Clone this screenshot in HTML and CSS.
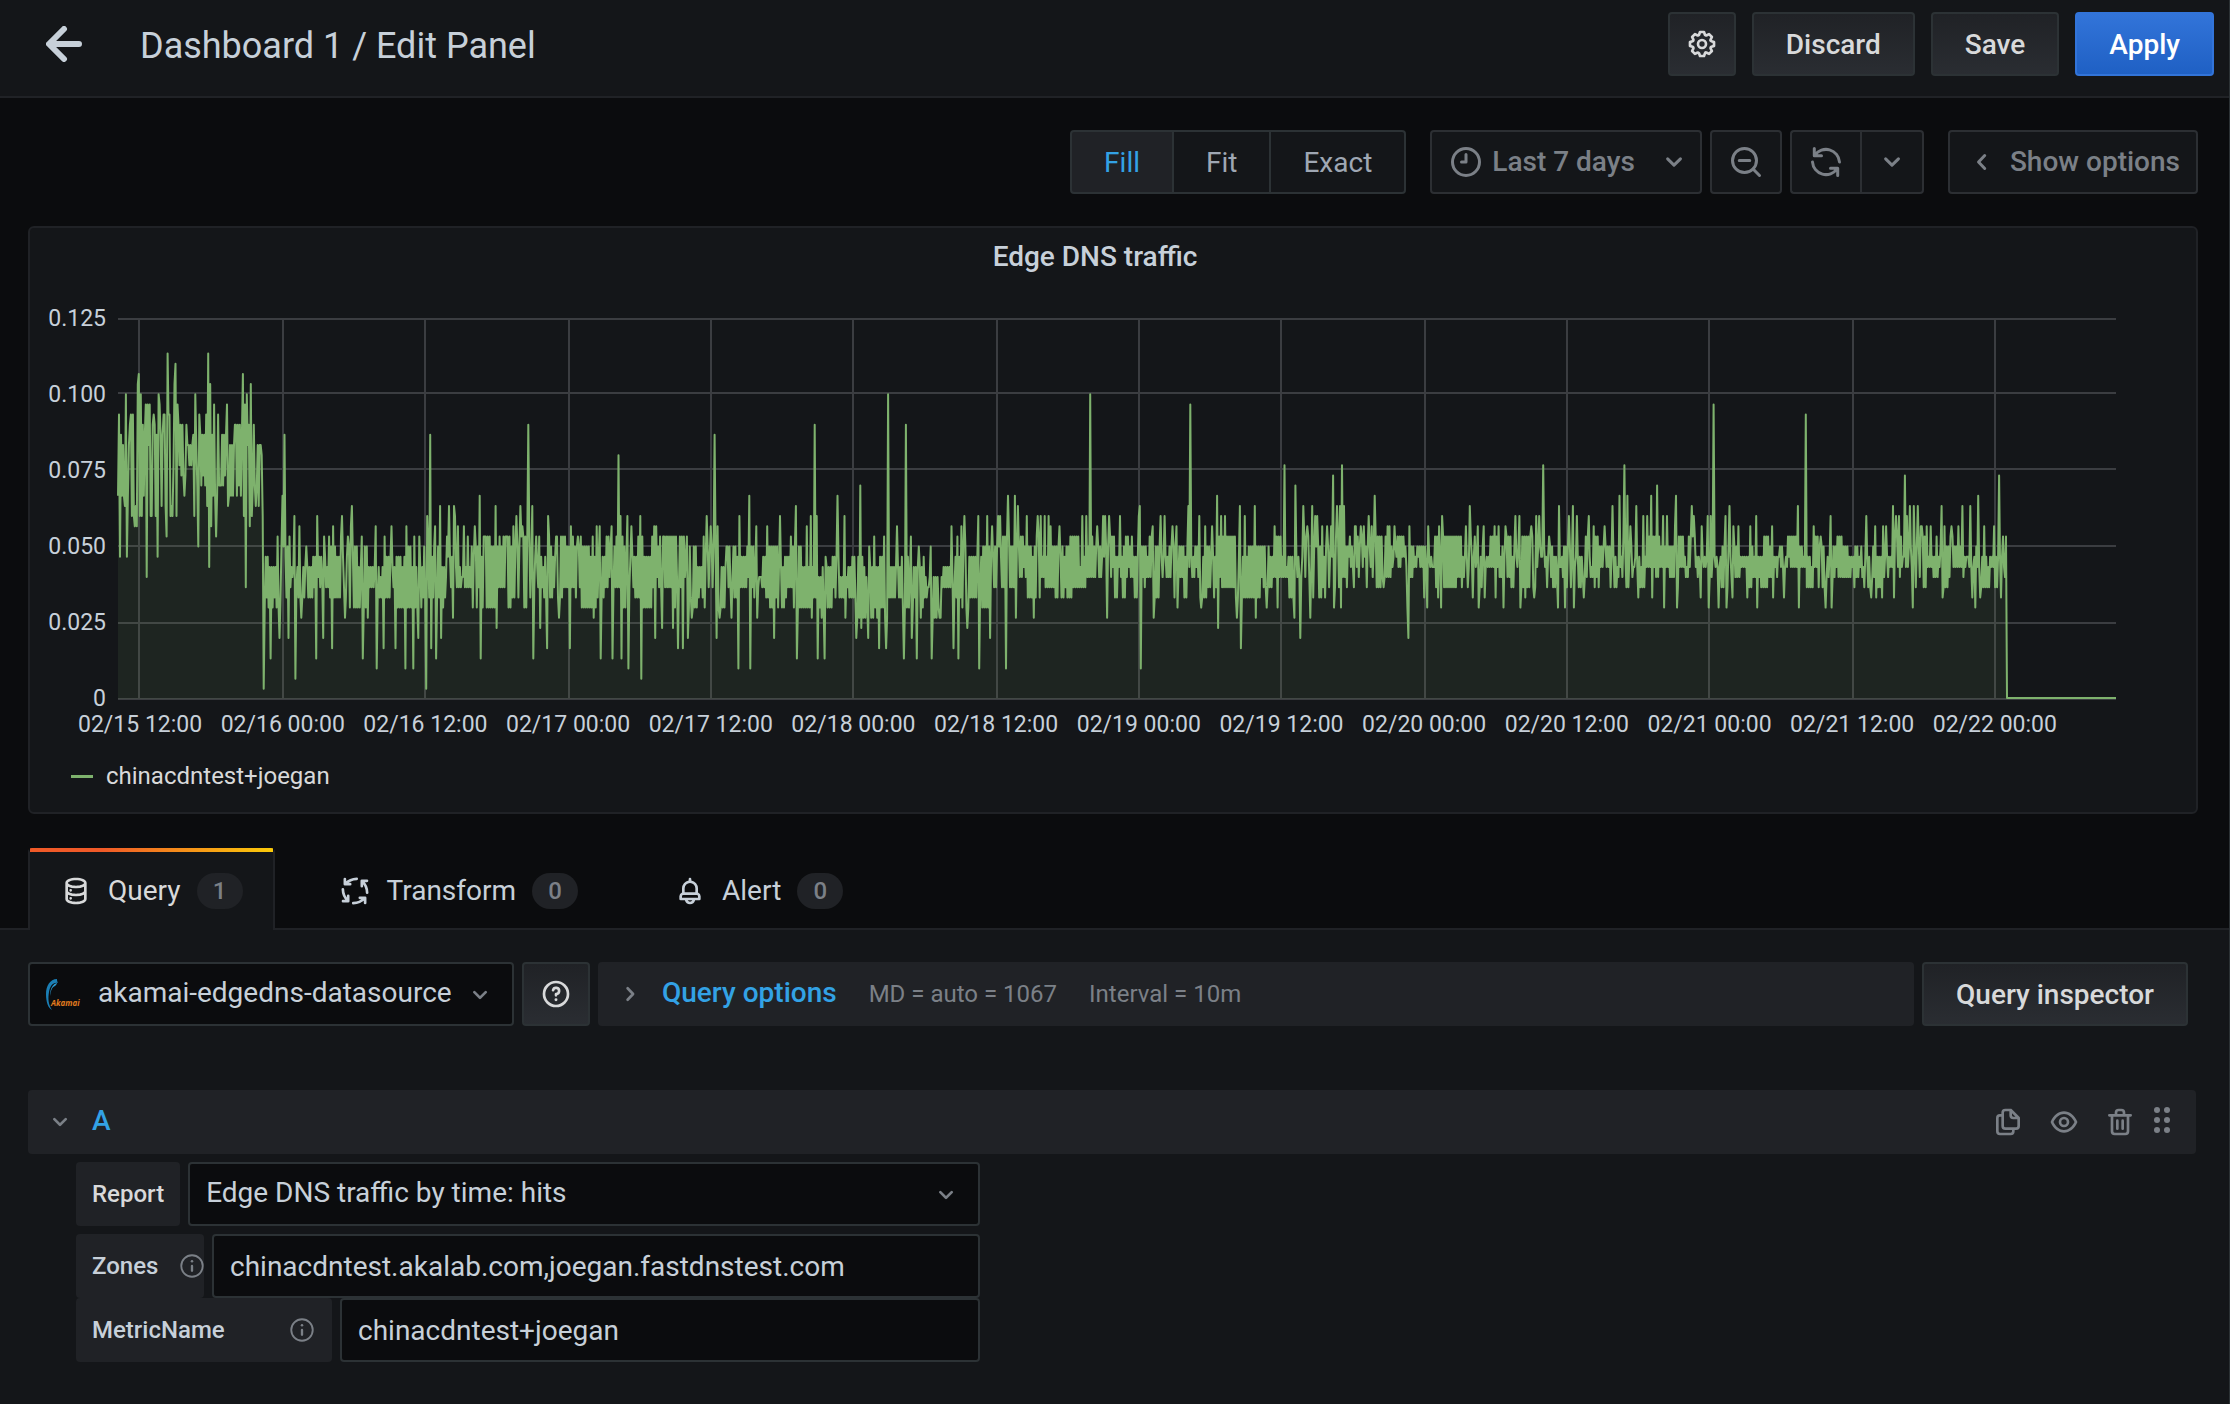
FILE: index.html
```html
<!DOCTYPE html>
<html lang="en">
<head>
<meta charset="utf-8">
<title>Dashboard 1 / Edit Panel</title>
<link rel="stylesheet" href="styles.css">
</head>
<body>
<svg class="sprite" aria-hidden="true">
  <symbol id="i-back" viewBox="0 0 36 36"><path class="line-thick" d="M33 18H5M18 3L3 18L18 33"/></symbol>
  <symbol id="i-down" viewBox="0 0 24 24"><path d="M17,9.17a1,1,0,0,0-1.41,0L12,12.71,8.46,9.17a1,1,0,0,0-1.41,0,1,1,0,0,0,0,1.42l4.24,4.24a1,1,0,0,0,1.42,0L17,10.59A1,1,0,0,0,17,9.17Z"/></symbol>
  <symbol id="i-left" viewBox="0 0 24 24"><path class="line" d="M13.8 7.7L9.7 12L13.8 16.3"/></symbol>
  <symbol id="i-right" viewBox="0 0 24 24"><path class="line" d="M10.2 7.7L14.3 12L10.2 16.3"/></symbol>
  <symbol id="i-cog" viewBox="0 0 24 24"><path d="M21.32,9.55l-1.89-.63.89-1.78A1,1,0,0,0,20.13,6L18,3.87a1,1,0,0,0-1.15-.19l-1.78.89-.63-1.89A1,1,0,0,0,13.5,2h-3a1,1,0,0,0-.95.68L8.92,4.57,7.14,3.68A1,1,0,0,0,6,3.87L3.87,6a1,1,0,0,0-.19,1.15l.89,1.78-1.89.63A1,1,0,0,0,2,10.5v3a1,1,0,0,0,.68.95l1.89.63-.89,1.78A1,1,0,0,0,3.87,18L6,20.13a1,1,0,0,0,1.15.19l1.78-.89.63,1.89a1,1,0,0,0,.95.68h3a1,1,0,0,0,.95-.68l.63-1.89,1.78.89A1,1,0,0,0,18,20.13L20.13,18a1,1,0,0,0,.19-1.15l-.89-1.78,1.89-.63A1,1,0,0,0,22,13.5v-3A1,1,0,0,0,21.32,9.55ZM20,12.78l-1.2.4A2,2,0,0,0,17.64,16l.57,1.14-1.1,1.1L16,17.64a2,2,0,0,0-2.79,1.16l-.4,1.2H11.22l-.4-1.2A2,2,0,0,0,8,17.64l-1.14.57-1.1-1.1L6.36,16A2,2,0,0,0,5.2,13.18L4,12.78V11.22l1.2-.4A2,2,0,0,0,6.36,8L5.79,6.89l1.1-1.1L8,6.36A2,2,0,0,0,10.82,5.2l.4-1.2h1.56l.4,1.2A2,2,0,0,0,16,6.36l1.14-.57,1.1,1.1L17.64,8a2,2,0,0,0,1.16,2.79l1.2.4ZM12,8a4,4,0,1,0,4,4A4,4,0,0,0,12,8Zm0,6a2,2,0,1,1,2-2A2,2,0,0,1,12,14Z"/></symbol>
  <symbol id="i-clock" viewBox="0 0 24 24"><circle class="line" cx="12" cy="12" r="9"/><path class="line" d="M12 7V12H9"/></symbol>
  <symbol id="i-zoom-out" viewBox="0 0 24 24"><circle class="line" cx="11" cy="11" r="8"/><path class="line" d="M16.7 16.7L21 21M7.5 11H14.5"/></symbol>
  <symbol id="i-sync" viewBox="0 0 24 24"><path class="line" d="M4.2 3V7.8H9M4.6 7.5A9 9 0 0 1 21 12M19.8 21V16.2H15M19.4 16.5A9 9 0 0 1 3 12"/></symbol>
  <symbol id="i-database" viewBox="0 0 24 24"><path d="M8,16.5a1,1,0,1,0,1,1A1,1,0,0,0,8,16.5ZM12,2C8,2,4,3.37,4,6V18c0,2.63,4,4,8,4s8-1.37,8-4V6C20,3.37,16,2,12,2Zm6,16c0,.71-2.28,2-6,2s-6-1.29-6-2V14.73A13.16,13.16,0,0,0,12,16a13.16,13.16,0,0,0,6-1.27Zm0-6c0,.71-2.28,2-6,2s-6-1.29-6-2V8.73A13.16,13.16,0,0,0,12,10a13.16,13.16,0,0,0,6-1.27ZM12,8C8.28,8,6,6.71,6,6s2.28-2,6-2,6,1.29,6,2S15.72,8,12,8ZM8,10.5a1,1,0,1,0,1,1A1,1,0,0,0,8,10.5Z"/></symbol>
  <symbol id="i-process" viewBox="0 0 24 24"><g class="line"><path id="turn" d="M13.3 2.9Q8.2 3 4.9 6.5M4.4 3V6.9H8.4"/><use href="#turn" transform="rotate(90 12 12)"/><use href="#turn" transform="rotate(180 12 12)"/><use href="#turn" transform="rotate(270 12 12)"/></g></symbol>
  <symbol id="i-bell" viewBox="0 0 24 24"><path d="M18,13.18V10a6,6,0,0,0-5-5.91V3a1,1,0,0,0-2,0V4.09A6,6,0,0,0,6,10v3.18A3,3,0,0,0,4,16v2a1,1,0,0,0,1,1H8.14a4,4,0,0,0,7.72,0H19a1,1,0,0,0,1-1V16A3,3,0,0,0,18,13.18ZM8,10a4,4,0,0,1,8,0v3H8Zm4,10a2,2,0,0,1-1.72-1h3.44A2,2,0,0,1,12,20Zm6-3H6V16a1,1,0,0,1,1-1H17a1,1,0,0,1,1,1Z"/></symbol>
  <symbol id="i-help" viewBox="0 0 24 24"><circle class="line" cx="12" cy="12" r="9"/><path class="line" d="M9.8 9.2A2.3 2.3 0 1 1 12 12V13"/><circle cx="12" cy="16.3" r="1.1"/></symbol>
  <symbol id="i-info" viewBox="0 0 24 24"><circle class="line-thin" cx="12" cy="12" r="9.2"/><path class="line" d="M12 12V16"/><circle cx="12" cy="8" r="1.1"/></symbol>
  <symbol id="i-copy" viewBox="0 0 24 24"><path d="M21,8.94a1.31,1.31,0,0,0-.06-.27l0-.09a1.07,1.07,0,0,0-.19-.28h0l-6-6h0a1.07,1.07,0,0,0-.28-.19.32.32,0,0,0-.09,0A.88.88,0,0,0,14.05,2H10A3,3,0,0,0,7,5V6H6A3,3,0,0,0,3,9V19a3,3,0,0,0,3,3h8a3,3,0,0,0,3-3V18h1a3,3,0,0,0,3-3V9S21,9,21,8.94ZM15,5.41,17.59,8H16a1,1,0,0,1-1-1ZM15,19a1,1,0,0,1-1,1H6a1,1,0,0,1-1-1V9A1,1,0,0,1,6,8H7v7a3,3,0,0,0,3,3h5Zm4-4a1,1,0,0,1-1,1H10a1,1,0,0,1-1-1V5a1,1,0,0,1,1-1h3V7a3,3,0,0,0,3,3h3Z"/></symbol>
  <symbol id="i-eye" viewBox="0 0 24 24"><path d="M21.92,11.6C19.9,6.91,16.1,4,12,4S4.1,6.91,2.08,11.6a1,1,0,0,0,0,.8C4.1,17.09,7.9,20,12,20s7.9-2.91,9.92-7.6A1,1,0,0,0,21.92,11.6ZM12,18c-3.17,0-6.17-2.29-7.9-6C5.83,8.29,8.83,6,12,6s6.17,2.29,7.9,6C18.17,15.71,15.17,18,12,18ZM12,8a4,4,0,1,0,4,4A4,4,0,0,0,12,8Zm0,6a2,2,0,1,1,2-2A2,2,0,0,1,12,14Z"/></symbol>
  <symbol id="i-trash" viewBox="0 0 24 24"><path d="M10,18a1,1,0,0,0,1-1V11a1,1,0,0,0-2,0v6A1,1,0,0,0,10,18ZM20,6H16V5a3,3,0,0,0-3-3H11A3,3,0,0,0,8,5V6H4A1,1,0,0,0,4,8H5V19a3,3,0,0,0,3,3h8a3,3,0,0,0,3-3V8h1a1,1,0,0,0,0-2ZM10,5a1,1,0,0,1,1-1h2a1,1,0,0,1,1,1V6H10Zm7,14a1,1,0,0,1-1,1H8a1,1,0,0,1-1-1V8H17Zm-3-1a1,1,0,0,0,1-1V11a1,1,0,0,0-2,0v6A1,1,0,0,0,14,18Z"/></symbol>
  <symbol id="i-drag" viewBox="0 0 32 32"><circle cx="11" cy="4" r="3"/><circle cx="21" cy="4" r="3"/><circle cx="11" cy="14" r="3"/><circle cx="21" cy="14" r="3"/><circle cx="11" cy="24" r="3"/><circle cx="21" cy="24" r="3"/></symbol>
</svg>

<header class="topbar">
  <a class="back" href="#" aria-label="Go back"><svg class="icon-back"><use href="#i-back"/></svg></a>
  <h1 class="page-title">Dashboard 1 / Edit Panel</h1>
  <div class="actions">
    <button class="btn btn-icon" type="button" aria-label="Dashboard settings"><svg class="icon"><use href="#i-cog"/></svg></button>
    <button class="btn" type="button">Discard</button>
    <button class="btn" type="button">Save</button>
    <button class="btn btn-primary" type="button">Apply</button>
  </div>
</header>

<main class="editor">
  <div class="toolbar">
    <div class="segmented">
      <button class="segment segment-active" type="button">Fill</button>
      <button class="segment" type="button">Fit</button>
      <button class="segment" type="button">Exact</button>
    </div>
    <div class="time-controls">
      <button class="tool tool-time" type="button"><svg class="icon-lg"><use href="#i-clock"/></svg>Last 7 days<svg class="icon-lg tool-caret"><use href="#i-down"/></svg></button>
      <button class="tool tool-zoom" type="button" aria-label="Zoom out"><svg class="icon-lg"><use href="#i-zoom-out"/></svg></button>
      <div class="tool-group">
        <button class="tool tool-refresh" type="button" aria-label="Refresh"><svg class="icon-lg"><use href="#i-sync"/></svg></button>
        <button class="tool tool-interval" type="button" aria-label="Refresh interval"><svg class="icon-lg"><use href="#i-down"/></svg></button>
      </div>
    </div>
    <button class="tool tool-options" type="button"><svg class="icon-lg"><use href="#i-left"/></svg>Show options</button>
  </div>

  <section class="panel">
    <h2 class="panel-title">Edge DNS traffic</h2>
    <div class="chart">
      <div class="y-axis"><span>0.125</span><span>0.100</span><span>0.075</span><span>0.050</span><span>0.025</span><span>0</span></div>
      <svg class="plot" viewBox="0 0 1998 382" preserveAspectRatio="none" role="img" aria-label="Edge DNS traffic over the last 7 days">
        <path class="grid-line" d="M0 1H1998M0 75H1998M0 151H1998M0 228H1998M0 305H1998M0 381H1998M21 0V380M165 0V380M307 0V380M451 0V380M593 0V380M735 0V380M879 0V380M1021 0V380M1163 0V380M1307 0V380M1449 0V380M1591 0V380M1735 0V380M1877 0V380"/>
        <path class="series-fill" id="series-fill"/>
        <path class="series-line" id="series-line"/>
      </svg>
      <div class="x-axis"><span>02/15 12:00</span><span>02/16 00:00</span><span>02/16 12:00</span><span>02/17 00:00</span><span>02/17 12:00</span><span>02/18 00:00</span><span>02/18 12:00</span><span>02/19 00:00</span><span>02/19 12:00</span><span>02/20 00:00</span><span>02/20 12:00</span><span>02/21 00:00</span><span>02/21 12:00</span><span>02/22 00:00</span></div>
    </div>
    <div class="legend"><span class="legend-dash"></span>chinacdntest+joegan</div>
  </section>

  <nav class="tabs">
    <a class="tab tab-active" href="#query"><svg class="icon"><use href="#i-database"/></svg><span class="tab-name">Query</span><span class="badge">1</span></a>
    <a class="tab" href="#transform"><svg class="icon"><use href="#i-process"/></svg><span class="tab-name">Transform</span><span class="badge">0</span></a>
    <a class="tab" href="#alert"><svg class="icon"><use href="#i-bell"/></svg><span class="tab-name">Alert</span><span class="badge">0</span></a>
  </nav>
</main>

<section class="query-pane" id="query">
  <div class="source-row">
    <div class="select-box source-select">
      <svg class="icon source-logo" viewBox="0 0 32 32" aria-hidden="true"><path fill="#1b7fb5" d="M11 1C4 1 0 8 0 16C0 24 2 30 6 32C2 26 2 20 3 14C4 8 7 4 12 5C11 3 11 2 11 1Z"/><path fill="#2a9bd3" d="M11 5C7 6 4 10 4 18C5 12 6 9 9 8C10 7 11 6 11 5Z"/><text class="akamai-word" x="5" y="28">Akamai</text></svg>
      <select aria-label="Data source"><option>akamai-edgedns-datasource</option></select>
      <svg class="icon select-caret"><use href="#i-down"/></svg>
    </div>
    <button class="btn btn-icon" type="button" aria-label="Data source help"><svg class="icon"><use href="#i-help"/></svg></button>
    <div class="options-bar">
      <svg class="icon muted"><use href="#i-right"/></svg>
      <a class="options-link" href="#">Query options</a>
      <span class="options-note">MD = auto = 1067</span>
      <span class="options-note">Interval = 10m</span>
    </div>
    <button class="btn" type="button">Query inspector</button>
  </div>

  <div class="query-head">
    <svg class="icon"><use href="#i-down"/></svg>
    <a class="query-name" href="#">A</a>
    <div class="query-tools">
      <button type="button" aria-label="Duplicate query"><svg class="icon"><use href="#i-copy"/></svg></button>
      <button type="button" aria-label="Disable query"><svg class="icon"><use href="#i-eye"/></svg></button>
      <button type="button" aria-label="Remove query"><svg class="icon"><use href="#i-trash"/></svg></button>
      <button class="drag" type="button" aria-label="Reorder query"><svg class="icon"><use href="#i-drag"/></svg></button>
    </div>
  </div>

  <form class="fields">
    <div class="field field-spaced">
      <label class="field-label strong" for="report">Report</label>
      <div class="select-box">
        <select id="report"><option>Edge DNS traffic by time: hits</option></select>
        <svg class="icon select-caret"><use href="#i-down"/></svg>
      </div>
    </div>
    <div class="field">
      <label class="field-label label-zones" for="zones">Zones<svg class="icon-sm"><use href="#i-info"/></svg></label>
      <input id="zones" type="text" value="chinacdntest.akalab.com,joegan.fastdnstest.com">
    </div>
    <div class="field">
      <label class="field-label label-metric" for="metric">MetricName<svg class="icon-sm"><use href="#i-info"/></svg></label>
      <input id="metric" type="text" value="chinacdntest+joegan">
    </div>
  </form>
</section>
<script src="chart.js"></script>
</body>
</html>
```
FILE: styles.css
```css
* { box-sizing: border-box; }

:root {
  --bg: #0b0c0e;
  --surface: #141619;
  --raised: #202226;
  --line: #202226;
  --line-strong: #2c3235;
  --text: #c7d0d9;
  --text-strong: #d8d9da;
  --text-weak: #7b8087;
  --blue: #33a2e5;
}

body {
  display: flex;
  flex-direction: column;
  min-height: 100vh;
  margin: 0;
  border-right: 1px solid var(--line-strong);
  background: var(--bg);
  color: var(--text);
  font: 400 28px/32px Roboto, "Liberation Sans", sans-serif;
}

h1, h2 { margin: 0; font-weight: 400; }
a { color: inherit; text-decoration: none; }
button, select, input { margin: 0; font: inherit; color: inherit; }

.sprite { position: absolute; width: 0; height: 0; }
.line, .line-thin, .line-thick { fill: none; stroke: currentColor; stroke-width: 2; stroke-linecap: round; stroke-linejoin: round; }
.line-thin { stroke-width: 1.6; }
.line-thick { stroke-width: 6; }
.akamai-word { fill: #e07b1f; font: italic 700 8px "Open Sans", sans-serif; }

svg { display: block; flex: none; fill: currentColor; }
.icon { width: 32px; height: 32px; }
.icon-lg { width: 36px; height: 36px; }
.icon-sm { width: 28px; height: 28px; color: var(--text-weak); }
.icon-back { width: 36px; height: 36px; overflow: visible; }
.muted { color: var(--text-weak); }

/* Top bar */
.topbar {
  display: flex;
  align-items: flex-start;
  height: 98px;
  padding: 12px 15px 0 46px;
  border-bottom: 2px solid var(--line);
  background: var(--surface);
}
.back { padding: 14px 0; }
.page-title { margin-left: 58px; font-size: 36px; line-height: 68px; }
.actions { display: flex; gap: 16px; margin-left: auto; }

.btn {
  height: 64px;
  padding: 2px 32px 0;
  border: 2px solid var(--line-strong);
  border-radius: 4px;
  background: linear-gradient(#202226, #2a2d32);
  color: var(--text-strong);
  font-weight: 500;
}
.btn-icon { padding: 0 16px; }
.btn-primary {
  border-color: #3274d9;
  background: linear-gradient(#3274d9, #1f60c4);
  color: #fff;
}

/* Editor toolbar */
.toolbar {
  display: flex;
  justify-content: flex-end;
  gap: 24px;
  padding: 32px 31px 32px 28px;
}
.segmented, .tool-group { display: flex; }
.segment {
  height: 64px;
  padding: 2px 32px 0;
  border: 2px solid var(--line-strong);
  border-left-width: 0;
  background: var(--surface);
  color: #9fa7b3;
}
.segment:first-child { border-left-width: 2px; border-radius: 4px 0 0 4px; }
.segment:last-child { border-radius: 0 4px 4px 0; }
.segment-active { background: var(--raised); color: var(--blue); }
.time-controls { display: flex; gap: 8px; }
.tool {
  display: flex;
  align-items: center;
  height: 64px;
  padding: 0 16px;
  border: 2px solid #2c2f33;
  border-radius: 4px;
  background: var(--surface);
  color: var(--text-weak);
  font-weight: 500;
}
.tool-time { gap: 8px; padding: 0 8px 0 16px; }
.tool-time .tool-caret { margin-left: 13px; }
.tool-refresh { border-right: 0; border-radius: 4px 0 0 4px; }
.tool-interval { padding: 0 12px; border-radius: 0 4px 4px 0; }
.tool-options { gap: 10px; padding: 0 16px 0 14px; }

/* Graph panel */
.panel {
  margin: 0 31px 0 28px;
  padding-bottom: 22px;
  border: 2px solid var(--line);
  border-radius: 6px;
  background: var(--surface);
}
.panel-title { padding-right: 36px; font-size: 28px; font-weight: 500; line-height: 58px; text-align: center; }
.chart {
  display: grid;
  grid-template-columns: 76px minmax(0, 1fr);
  column-gap: 12px;
  padding: 32px 80px 0 0;
  font-size: 23px;
  line-height: 24px;
}
.y-axis {
  display: flex;
  flex-direction: column;
  justify-content: space-between;
  margin: -11px 0;
  text-align: right;
}
.plot { width: 100%; height: 382px; overflow: visible; }
.grid-line { fill: none; stroke: rgba(200, 200, 210, 0.22); stroke-width: 2; }
.series-fill { fill: rgba(126, 178, 109, 0.1); }
.series-line { fill: none; stroke: #7eb26d; stroke-width: 2; stroke-linejoin: round; }
.x-axis {
  display: flex;
  grid-column: 2;
  justify-content: space-between;
  margin: 13px 59px 0 -40px;
  white-space: nowrap;
}
.legend {
  display: flex;
  align-items: center;
  gap: 13px;
  padding: 25px 40px 0 41px;
  color: var(--text-strong);
  font-size: 24px;
  line-height: 28px;
}
.legend-dash { width: 22px; height: 3px; background: #7eb26d; }

/* Tabs */
.tabs { display: flex; gap: 32px; margin-top: 34px; padding-left: 28px; border-bottom: 2px solid var(--line); }
.tab {
  display: flex;
  align-items: center;
  height: 80px;
  padding: 6px 32px 0;
}
.tab-name { margin-left: 16px; }
.badge {
  min-width: 46px;
  margin-left: 16px;
  border-radius: 18px;
  background: var(--raised);
  color: var(--text-weak);
  font-size: 24px;
  font-weight: 500;
  line-height: 36px;
  text-align: center;
}
.tab-active {
  height: 82px;
  margin-bottom: -2px;
  padding: 0 30px;
  border: 2px solid var(--line);
  border-top: 4px solid transparent;
  border-bottom: 0;
  border-radius: 4px 4px 0 0;
  background:
    linear-gradient(var(--surface), var(--surface)) padding-box,
    linear-gradient(90deg, #f05a28 30%, #fbca0a 99%) border-box;
  color: var(--text-strong);
}

/* Query editor */
.query-pane { flex: 1; padding: 32px 33px 40px 28px; background: var(--surface); }
.source-row { display: flex; gap: 8px; padding-right: 8px; }
.select-box { position: relative; }
.select-box select, .field input {
  width: 100%;
  height: 64px;
  padding: 0 16px;
  border: 2px solid var(--line-strong);
  border-radius: 4px;
  outline: 0;
  background: var(--bg);
  appearance: none;
}
.select-box select { padding-bottom: 3px; }
.source-select { width: 486px; }
.source-select select { padding-left: 68px; }
.source-logo { position: absolute; top: 16px; left: 18px; overflow: visible; }
.select-caret { position: absolute; top: 17px; right: 18px; color: var(--text-weak); pointer-events: none; }
.options-bar {
  display: flex;
  flex: 1;
  align-items: center;
  padding: 0 16px;
  border-radius: 4px;
  background: var(--raised);
}
.options-link { margin-left: 16px; padding-bottom: 2px; color: var(--blue); font-weight: 500; }
.options-note { margin-left: 32px; color: var(--text-weak); font-size: 24px; }

.query-head {
  display: flex;
  align-items: center;
  height: 64px;
  margin-top: 64px;
  padding: 0 18px 0 16px;
  border-radius: 4px;
  background: var(--raised);
  color: var(--text-weak);
}
.query-name { margin-left: 16px; padding-bottom: 2px; color: var(--blue); font-weight: 500; }
.query-tools { display: flex; gap: 24px; margin-left: auto; }
.query-tools button { padding: 0; border: 0; background: none; color: var(--text-weak); }
.query-tools .drag { margin-left: -14px; }

.fields { width: 904px; margin: 8px 0 0 48px; }
.field { display: flex; gap: 8px; }
.field-spaced { margin-bottom: 8px; }
.field .select-box, .field input { flex: 1; min-width: 0; }
.field-label {
  display: flex;
  align-items: center;
  justify-content: space-between;
  height: 64px;
  padding: 0 16px;
  border-radius: 4px;
  background: var(--raised);
  font-size: 24px;
  font-weight: 500;
}
.strong { color: var(--text-strong); }
.label-zones { justify-content: flex-start; gap: 20px; width: 128px; padding-right: 0; }
.label-metric { width: 256px; }
```
FILE: chart.js
```js
// Hits are counted per five minutes; one count is 1/300 of the axis unit.
const WIDTH = 1998;
const BASE = 381;
const COUNT_HEIGHT = 10.16;
const STEPS = 2016;
const END_X = 1889;

// Peaks and dips as "position:count", each segment with its own origin and scale.
const segments = [
  { origin: -98, scale: 2.613, points: '259:28 262:14 270:25 275:19 277:30 280:14 288:27 294:17 296:28 299:17 304:17 307:31 311:32 316:30 318:18 329:29 332:12 335:29 338:29 342:18 346:27 350:28 360:14 363:30 366:29 374:28 378:28 382:31 384:16 386:34 390:28 393:18 398:18 403:31 405:18 407:33 410:18 412:29 418:27 424:27 430:20 437:25 443:23 453:26 456:18 458:30 466:15 468:28 480:22 487:28 492:34 495:13 497:31 500:17 508:29 513:16 517:28 523:21 541:29 544:19 557:20 561:27 574:27 582:32 584:18 587:29 590:11 593:30 598:27 601:17 603:31 606:18 611:27 617:19 620:25 625:19 628:25 633:18 637:1 654:18 656:4 673:16 679:6 686:20 691:26 701:6 705:16 717:18 720:2 731:17 736:8 749:15 774:4 777:18 792:6 796:16 808:16 816:5 818:17 838:16 842:18 849:8 858:16 864:17 868:19 893:16 896:4 908:8 930:17 933:3 950:5 953:16 971:17 982:5 1007:3 1010:17 1028:3 1031:16 1041:6 1044:16 1062:1 1065:18 1072:26 1075:5 1085:17 1088:4 1098:19 1101:6 1115:16 1121:19 1131:8 1133:19 1137:18 1145:17 1160:17 1171:16 1189:17 1202:20 1205:4 1213:16 1223:16 1243:19 1246:7 1272:16 1290:17 1298:18 1308:19 1312:17 1328:27 1338:19 1341:4 1350:16 1357:16 1360:7 1378:5 1381:18 1402:16 1408:8 1437:5 1440:17 1458:16 1465:16 1497:16 1500:8 1508:17 1515:17 1518:4 1546:17 1549:4 1564:24' },
  { origin: 482, scale: 2.063, points: '2:4 26:4 38:24 42:18 44:4 57:18 59:3 65:17 83:18 86:2 112:17 114:6 116:17 129:7 131:16 151:7 161:5 164:16 168:16 171:5 179:16 182:6 190:8 215:16 220:18 228:17 236:26 240:6 243:17 247:8 260:15 271:8 285:3 288:18 308:20 311:3 323:17 325:8 345:17 360:6 372:18 394:16 404:19 407:4 427:17 434:18 437:8 443:27 447:18 450:4 463:4 466:14 490:20 504:18 507:8 529:6 537:21 539:7 554:6 556:15 565:16 576:5 587:16 590:5 594:30 613:17 628:4 631:27 641:16 644:6 654:4 657:15 683:15 685:4 700:8 726:17 729:5 738:16 740:4 746:17 752:18 757:7 780:18 783:3 798:18 805:6 808:17 821:18 825:18 838:3 841:20 856:20 859:8 862:19 881:18 895:8 902:18 909:18 918:18 925:18 930:17 940:10 949:17 974:16 995:18 1004:18 1012:30 1025:17 1037:18 1042:18 1047:8 1050:18 1073:18 1111:18 1113:19 1116:3 1140:17 1142:8 1157:18 1165:18 1181:17 1190:17 1192:9 1214:19 1218:29 1237:18 1240:9 1248:17 1262:17 1273:20 1276:7 1282:18 1290:18 1313:8 1320:19 1323:5 1331:18 1350:19 1353:8 1375:9 1391:17 1398:9 1412:23 1433:8 1435:21 1445:6 1451:19 1460:17 1466:8 1469:19 1475:18 1480:18 1490:17 1501:17 1508:17 1512:22 1515:9 1521:19 1526:19 1529:9 1531:23 1535:19 1558:17' },
  { origin: 1222, scale: 1.8233, points: '2:9 4:23 8:19 26:11 28:17 38:17 44:17 49:11 53:18 57:17 63:20 66:20 67:11 79:11 86:17 90:17 99:17 122:9 125:6 127:17 153:10 159:9 161:17 178:10 181:17 185:9 187:18 199:16 229:17 237:19 243:10 251:17 253:9 262:17 264:10 281:17 283:10 290:17 298:9 301:17 320:18 327:18 329:9 337:10 348:17 355:10 357:18 363:18 371:23 381:16 398:9 400:19 410:9 417:18 425:19 427:9 432:18 445:10 453:18 463:17 483:17 497:19 509:20 518:23 524:20 529:17 541:19 543:10 553:18 560:18 567:20 569:10 578:21 589:18 591:9 596:18 611:17 612:20 614:9 642:19 645:18 658:10 660:17 671:18 673:9 676:18 681:29 690:9 703:18 705:9 710:19 715:10 718:17 726:17 742:10 748:17 759:18 761:9 788:17 790:10 809:10 817:16 835:19 837:9 849:28 864:17 877:16 886:9 894:18 897:9 910:16 937:17 938:11 960:18 969:10 975:17 977:10 989:10 990:17 995:17 1008:19 1010:10 1014:18 1020:18 1030:22 1033:18 1039:19 1045:9 1047:19 1053:19 1058:17 1061:17 1069:17 1077:17 1087:16 1097:19 1099:10 1103:17 1115:17 1128:17 1135:19 1149:19 1152:10 1159:9 1163:20 1168:10 1175:17 1183:11 1193:17 1202:22 1205:10 1208:16' }
];

// Ordinary traffic between the peaks: [until x, lowest count, highest count].
const bands = [
  [12, 18, 26], [55, 18, 28], [66, 21, 28], [76, 23, 25], [143, 19, 27], [350, 9, 15], [560, 9, 16], [700, 9, 15],
  [820, 8, 14], [880, 9, 15], [980, 10, 16], [1220, 10, 16], [1480, 11, 16], [1700, 11, 16], [WIDTH, 11, 16]
];

let seed = 20210222;
function random() {
  seed = (seed * 1103515245 + 12345) % 2147483648;
  return seed / 2147483648;
}

// Traffic comes in short runs that swing between a peak and a trough count.
const counts = [];
let runEnd = 0;
let peak = 0;
let trough = 0;
for (let i = 0; i <= STEPS; i++) {
  const x = i * WIDTH / STEPS;
  const [, low, high] = bands.find(b => x <= b[0]) || bands[bands.length - 1];
  if (i >= runEnd) {
    runEnd = i + 3 + Math.floor(random() * 7);
    peak = high - Math.floor(random() * 3);
    trough = low + Math.floor(random() * 3);
  }
  const stray = random() < 0.1 ? 1 : 0;
  counts.push(i % 2 ? peak - stray : trough + stray);
}
for (const segment of segments) {
  for (const point of segment.points.split(' ')) {
    const [position, count] = point.split(':').map(Number);
    const x = segment.origin + position / segment.scale;
    counts[Math.max(0, Math.round(x * STEPS / WIDTH))] = count;
  }
}

let line = '';
counts.forEach((count, i) => {
  const x = i * WIDTH / STEPS;
  if (x < END_X - 1) line += (i ? 'L' : 'M') + x.toFixed(1) + ' ' + (BASE - count * COUNT_HEIGHT).toFixed(1);
});
line += 'L' + END_X + ' 380L' + WIDTH + ' 380';

document.getElementById('series-line').setAttribute('d', line);
document.getElementById('series-fill').setAttribute('d', line + 'V381H0Z');
```
